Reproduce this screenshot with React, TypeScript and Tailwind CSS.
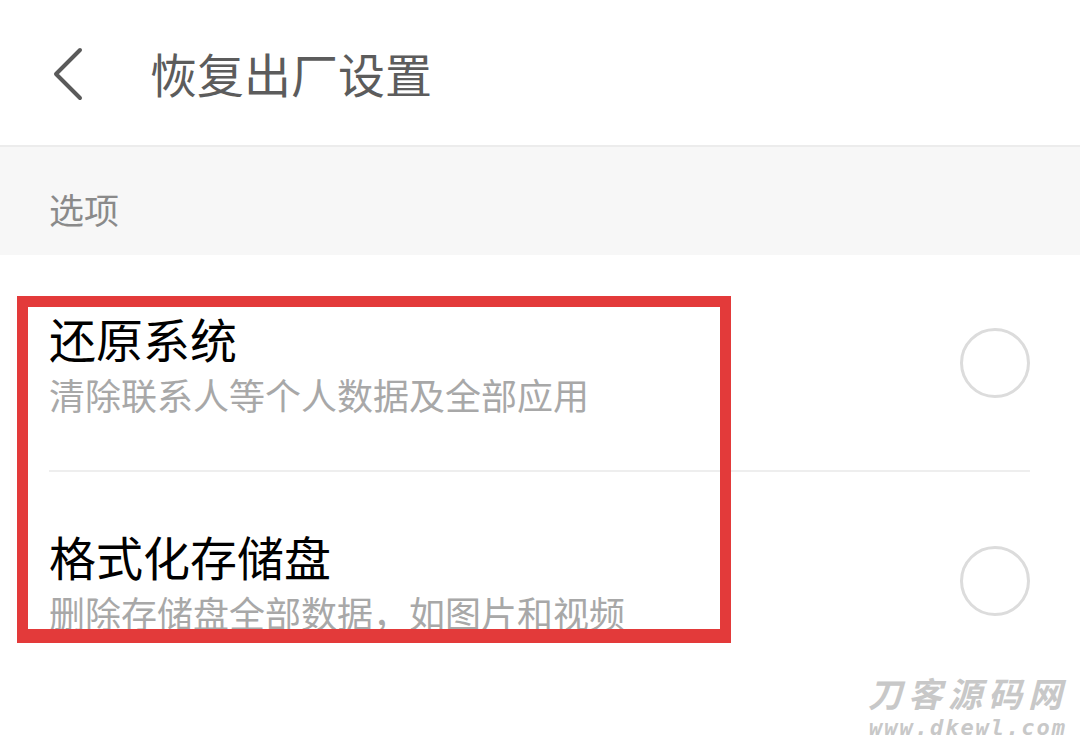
import React from "react";

const FONT = { fontFamily: '"Noto Sans CJK SC", "Noto Sans", sans-serif' };

interface Option {
  title: string;
  desc: string;
}

const options: Option[] = [
  { title: "还原系统", desc: "清除联系人等个人数据及全部应用" },
  { title: "格式化存储盘", desc: "删除存储盘全部数据，如图片和视频" },
];

const Radio = () => (
  <div className="w-[70px] h-[70px] rounded-full border-[3px] border-[#dcdcdc] shrink-0" />
);

export default function App() {
  return (
    <div className="relative w-[1080px] h-[741px] bg-white overflow-hidden" style={FONT}>
      {/* Header */}
      <div className="h-[147px] flex items-center border-b-2 border-[#ececec]">
        <svg width="40" height="56" viewBox="0 0 40 56" className="ml-[46px] mt-[2px]">
          <path
            d="M34 4 L10 28 L34 52"
            fill="none"
            stroke="#5a5a5a"
            strokeWidth="4"
            strokeLinecap="round"
            strokeLinejoin="round"
          />
        </svg>
        <h1 className="ml-[64px] text-[47px] leading-none text-[#5c5c5c]">恢复出厂设置</h1>
      </div>

      {/* Section label */}
      <div className="h-[108px] bg-[#f7f7f7] pl-[49px] pt-[40px]">
        <span className="text-[35px] leading-[44px] text-[#8a8a8a]">选项</span>
      </div>

      {/* Options */}
      <div className="pl-[49px] pr-[50px]">
        {options.map((opt, i) => (
          <div
            key={opt.title}
            className={`flex items-center justify-between h-[217px] ${
              i === 0 ? "border-b-2 border-[#eeeeee]" : ""
            }`}
          >
            <div className="flex flex-col">
              <span className="text-[47px] leading-[56px] text-black">{opt.title}</span>
              <span className="text-[36px] leading-[44px] mt-[6px] text-[#a8a8a8]">{opt.desc}</span>
            </div>
            <Radio />
          </div>
        ))}
      </div>

      {/* Red highlight annotation */}
      <div className="absolute left-[17px] top-[296px] w-[714px] h-[347px] border-[11px] border-b-[14px] border-[#e33a3a]" />

      {/* Watermark */}
      <div className="absolute right-[12px] bottom-[2px] flex flex-col items-center gap-[2px] text-[#c8c8c8] italic font-bold">
        <div
          className="text-[34px] leading-[40px] tracking-[6px]"
          style={{ fontFamily: '"Liberation Sans", "Noto Sans CJK SC", sans-serif' }}
        >
          刀客源码网
        </div>
        <div
          className="text-[22px] leading-[22px] tracking-[2px]"
          style={{ fontFamily: '"DejaVu Sans Mono", monospace' }}
        >
          www.dkewl.com
        </div>
      </div>
    </div>
  );
}
